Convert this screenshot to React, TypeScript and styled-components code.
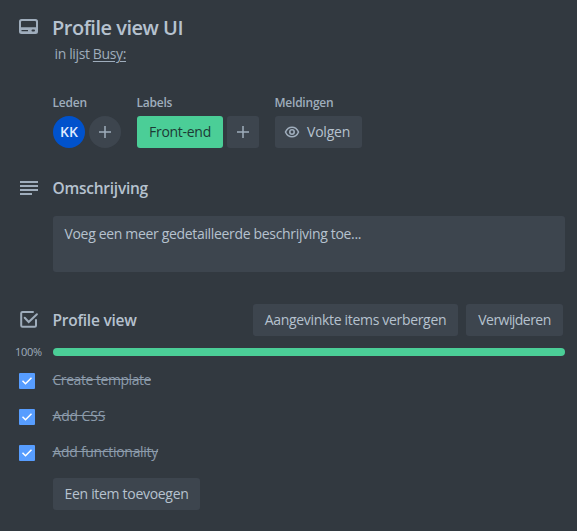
import React from 'react';
import styled, { createGlobalStyle } from 'styled-components';

const Global = createGlobalStyle`
  * { box-sizing: border-box; }
  body {
    margin: 0;
    background: #323940;
    color: #b6c2cf;
    font-family: 'Segoe UI', 'Open Sans', 'Noto Sans', sans-serif;
    font-size: 14px;
    line-height: 20px;
  }
  h1, h2, h3, p, ul { margin: 0; padding: 0; }
`;

const Card = styled.main`
  width: 577px;
  height: 531px;
  padding: 16px 12px 0 15px;
  overflow: hidden;
  background: #323940;
`;

const Row = styled.div<{ $h: number; $mt?: number }>`
  display: grid;
  grid-template-columns: 38px 1fr;
  height: ${p => p.$h}px;
  margin-top: ${p => p.$mt ?? 0}px;
  align-items: center;
`;

const Gutter = styled.div`
  display: flex;
  padding-left: 2px;
  color: #9fadbc;
`;

const Title = styled.h1`
  margin-left: -1px;
  font-size: 20px;
  line-height: 24px;
  font-weight: 600;
  letter-spacing: -0.5px;
  white-space: nowrap;
`;

const Heading = styled.h2`
  margin-left: -0.5px;
  font-size: 15.5px;
  line-height: 20px;
  font-weight: 600;
  letter-spacing: -0.25px;
  white-space: nowrap;
`;

const Location = styled.p`
  margin: 4px 0 0 39.5px;
  color: #9fadbc;
  letter-spacing: -0.37px;
  span { text-decoration: underline; text-underline-offset: 2px; }
`;

const Meta = styled.section`
  display: flex;
  margin: 29px 0 0 38px;
`;

const Group = styled.div<{ $w: number }>`
  width: ${p => p.$w}px;
`;

const GroupTitle = styled.h3`
  margin: 0 0 3px -0.5px;
  color: #9fadbc;
  font-size: 12px;
  line-height: 20px;
  font-weight: 600;
  letter-spacing: -0.23px;
`;

const Items = styled.div<{ $gap?: number }>`
  display: flex;
  gap: ${p => p.$gap ?? 4}px;
`;

const Circle = styled.div<{ $avatar?: boolean }>`
  display: grid;
  place-items: center;
  width: 32px;
  height: 32px;
  border-radius: 50%;
  background: ${p => (p.$avatar ? '#0052cc' : '#3d454e')};
  color: ${p => (p.$avatar ? '#dfeaff' : '#9fadbc')};
  font-size: 14px;
  font-weight: 600;
`;

const Button = styled.button<{ $w: number; $green?: boolean; $ls?: number }>`
  display: flex;
  align-items: center;
  justify-content: center;
  gap: 8px;
  width: ${p => p.$w}px;
  height: 32px;
  padding: 0;
  border: 0;
  border-radius: 3px;
  background: ${p => (p.$green ? '#4bce97' : '#3d454e')};
  color: ${p => (p.$green ? '#1d3a35' : '#b6c2cf')};
  font: inherit;
  letter-spacing: ${p => p.$ls ?? 0}px;
  white-space: nowrap;
`;

const WatchButton = styled(Button)`
  justify-content: flex-start;
  gap: 7.5px;
  padding-left: 8.5px;
`;

const Description = styled.div`
  height: 56px;
  margin: 16px 0 0 38px;
  padding: 8px 11.5px;
  border-radius: 3px;
  background: #3d454e;
  letter-spacing: -0.33px;
`;

const Between = styled.div`
  display: flex;
  align-items: center;
  justify-content: space-between;
  padding-right: 2px;
`;

const Percent = styled.span`
  color: #9fadbc;
  font-size: 11px;
  line-height: 12px;
  letter-spacing: -0.25px;
`;

const Bar = styled.div`
  height: 8px;
  border-radius: 4px;
  background: #4bce97;
`;

const List = styled.ul`
  margin-top: 4px;
  list-style: none;
`;

const Item = styled.li`
  display: grid;
  grid-template-columns: 38px 1fr;
  align-items: center;
  height: 36px;
  color: #8c9bab;
`;

const Box = styled.span`
  display: grid;
  width: 16px;
  height: 16px;
  margin: 2px 0 0 4px;
  border-radius: 1px;
  background: #579dff;
`;

const Done = styled.span<{ $ls: number }>`
  justify-self: start;
  margin-left: -0.5px;
  letter-spacing: ${p => p.$ls}px;
  text-decoration: line-through;
`;

const Footer = styled.div`
  margin: 8px 0 0 38px;
`;

const Icon = styled.svg`
  display: block;
  width: 24px;
  height: 24px;
`;

const CardIcon = () => (
  <Icon viewBox="0 0 24 24" fill="currentColor">
    <path
      fillRule="evenodd"
      d="M4.500 3h14A2.500 2.500 0 0 1 21 5.500v10a2.500 2.500 0 0 1-2.500 2.500h-14A2.500 2.500 0 0 1 2 15.500v-10A2.500 2.500 0 0 1 4.500 3ZM5 5a1 1 0 0 0-1 1v5.300h15V6a1 1 0 0 0-1-1ZM4.500 14v1.300H11V14ZM15.500 13.500a1 1 0 0 0 0 2H17a1 1 0 0 0 0-2Z"
    />
  </Icon>
);

const LinesIcon = () => (
  <Icon viewBox="0 0 24 24" fill="currentColor">
    <path d="M3 5h18v2H3zM3 9h18v2H3zM3 13h18v2H3zM3 17h12v2H3z" />
  </Icon>
);

const ChecklistIcon = () => (
  <Icon viewBox="0 0 24 24" fill="none" stroke="currentColor" strokeWidth="2" strokeLinecap="round">
    <path d="M16 4H5.500A1.300 1.300 0 0 0 4.200 5.300v12.200a1.300 1.300 0 0 0 1.300 1.300h12.200a1.300 1.300 0 0 0 1.300-1.300V12" />
    <path d="m7.700 9.800 4 4.200 8.200-7.700" />
  </Icon>
);

const PlusIcon = () => (
  <svg width="14" height="14" viewBox="0 0 14 14" fill="none" stroke="#9fadbc" strokeWidth="1.500">
    <path d="M7 1v12M1 7h12" />
  </svg>
);

const EyeIcon = () => (
  <svg width="16" height="16" viewBox="0 0 16 16" fill="none" stroke="#9fadbc" strokeWidth="1.600">
    <path d="M1.500 8C2.800 5 5.200 3.200 8 3.200S13.200 5 14.500 8c-1.300 3-3.700 4.800-6.500 4.800S2.800 11 1.500 8Z" />
    <circle cx="8" cy="8" r="2.200" />
  </svg>
);

const Tick = () => (
  <svg width="16" height="16" viewBox="0 0 16 16" fill="none" stroke="#fff" strokeWidth="1.500">
    <path d="m3.500 7.800 3 3 6-6" />
  </svg>
);

const tasks = [
  { label: 'Create template', spacing: -0.45 },
  { label: 'Add CSS', spacing: -0.15 },
  { label: 'Add functionality', spacing: -0.3 },
];

export default function App() {
  return (
    <>
      <Global />
      <Card>
        <Row $h={24}>
          <Gutter><CardIcon /></Gutter>
          <Title>Profile view UI</Title>
        </Row>
        <Location>in lijst <span>Busy:</span></Location>

        <Meta>
          <Group $w={84}>
            <GroupTitle>Leden</GroupTitle>
            <Items>
              <Circle $avatar>KK</Circle>
              <Circle><PlusIcon /></Circle>
            </Items>
          </Group>
          <Group $w={138}>
            <GroupTitle>Labels</GroupTitle>
            <Items>
              <Button $w={86} $green $ls={-0.28}>Front-end</Button>
              <Button $w={32}><PlusIcon /></Button>
            </Items>
          </Group>
          <Group $w={90}>
            <GroupTitle>Meldingen</GroupTitle>
            <WatchButton $w={87} $ls={-0.2}><EyeIcon />Volgen</WatchButton>
          </Group>
        </Meta>

        <Row $h={24} $mt={28}>
          <Gutter><LinesIcon /></Gutter>
          <Heading>Omschrijving</Heading>
        </Row>
        <Description>Voeg een meer gedetailleerde beschrijving toe...</Description>

        <Row $h={32} $mt={32}>
          <Gutter><ChecklistIcon /></Gutter>
          <Between>
            <Heading>Profile view</Heading>
            <Items $gap={8}>
              <Button $w={205} $ls={-0.32}>Aangevinkte items verbergen</Button>
              <Button $w={97} $ls={-0.55}>Verwijderen</Button>
            </Items>
          </Between>
        </Row>
        <Row $h={12} $mt={10}>
          <Percent>100%</Percent>
          <Bar />
        </Row>
        <List>
          {tasks.map(t => (
            <Item key={t.label}>
              <Box><Tick /></Box>
              <Done $ls={t.spacing}>{t.label}</Done>
            </Item>
          ))}
        </List>
        <Footer><Button $w={147} $ls={-0.3}>Een item toevoegen</Button></Footer>
      </Card>
    </>
  );
}
